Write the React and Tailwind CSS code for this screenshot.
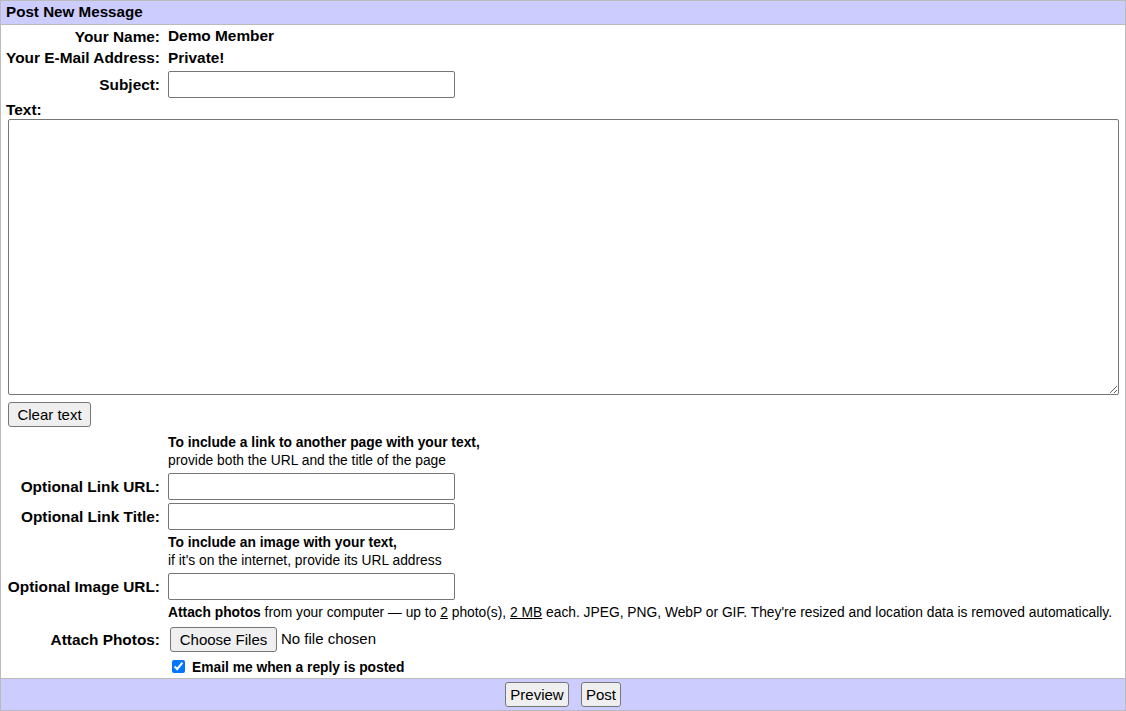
import { useState } from "react";

const Field = ({ label, height = "h-[30px]", children }) => (
  <div className={`flex items-center ${height}`}>
    <div className="w-[159px] shrink-0 text-right font-bold text-[15.4px] leading-[17px] whitespace-nowrap">{label}</div>
    <div className="ml-[8px] flex items-center">{children}</div>
  </div>
);

const TextInput = ({ value, onChange }) => (
  <input
    type="text"
    value={value}
    onChange={onChange}
    className="w-[287px] h-[27px] border border-[#767676] rounded-[2px] bg-white px-[2px] text-[15px] outline-none"
  />
);

const Btn = ({ children, className = "", onClick }) => (
  <button
    type="button"
    onClick={onClick}
    className={`h-[25px] bg-[#efefef] border border-[#767676] rounded-[3px] text-[15px] leading-none text-black text-center ${className}`}
  >
    {children}
  </button>
);

export default function App() {
  const [form, setForm] = useState({ subject: "", text: "", linkUrl: "", linkTitle: "", imageUrl: "" });
  const [notify, setNotify] = useState(true);

  const set = (key) => (e) => setForm({ ...form, [key]: e.target.value });

  return (
    <div className="w-[1126px] h-[711px] flex flex-col border border-[#bbbbbb] bg-white text-black font-['Liberation_Sans',Arial,sans-serif]">
      {/* header bar */}
      <div className="h-[24px] shrink-0 flex items-center px-[5px] bg-[#ccccff] border-b border-[#bbbbbb] text-[15.2px] font-bold">
        Post New Message
      </div>

      <div className="flex-1 flex flex-col">
        <Field label="Your Name:" height="h-[22px]">
          <span className="font-bold text-[15.4px]">Demo Member</span>
        </Field>
        <Field label="Your E-Mail Address:" height="h-[21px]">
          <span className="font-bold text-[15.4px]">Private!</span>
        </Field>
        <Field label="Subject:" height="h-[32px]">
          <TextInput value={form.subject} onChange={set("subject")} />
        </Field>

        <div className="h-[19px] flex items-center pl-[5px] font-bold text-[15.4px]">Text:</div>
        <textarea
          value={form.text}
          onChange={set("text")}
          className="ml-[7px] w-[1111px] h-[276px] border border-[#767676] rounded-[2px] p-[2px] text-[15px] outline-none resize"
        />

        <div className="mt-[7px] ml-[7px]">
          <Btn className="w-[83px]" onClick={() => setForm({ ...form, text: "" })}>Clear text</Btn>
        </div>

        {/* link help */}
        <div className="mt-[7px] pl-[167px] text-[13.8px] leading-[18px]">
          <div className="font-bold">To include a link to another page with your text,</div>
          <div>provide both the URL and the title of the page</div>
        </div>
        <div className="mt-[1px]">
          <Field label="Optional Link URL:">
            <TextInput value={form.linkUrl} onChange={set("linkUrl")} />
          </Field>
        </div>
        <Field label="Optional Link Title:">
          <TextInput value={form.linkTitle} onChange={set("linkTitle")} />
        </Field>

        {/* image help */}
        <div className="mt-[3px] pl-[167px] text-[13.8px] leading-[18px]">
          <div className="font-bold">To include an image with your text,</div>
          <div>if it's on the internet, provide its URL address</div>
        </div>
        <div className="mt-[1px]">
          <Field label="Optional Image URL:">
            <TextInput value={form.imageUrl} onChange={set("imageUrl")} />
          </Field>
        </div>

        <div className="mt-[3px] pl-[167px] text-[13.8px] leading-[18px] whitespace-nowrap">
          <b>Attach photos</b> from your computer — up to <u>2</u> photo(s), <u>2 MB</u> each. JPEG, PNG, WebP or GIF. They're resized and location data is removed automatically.
        </div>

        <Field label="Attach Photos:" height="h-[34px]">
          <Btn className="ml-[2px] w-[107px]">Choose Files</Btn>
          <span className="ml-[4px] text-[15px]">No file chosen</span>
        </Field>

        <div className="h-[21px] flex items-center pl-[171px]">
          <input
            type="checkbox"
            checked={notify}
            onChange={(e) => setNotify(e.target.checked)}
            className="m-0 w-[13px] h-[13px] accent-[#0075ff]"
          />
          <span className="ml-[7px] mt-[4px] text-[13.8px] font-bold">Email me when a reply is posted</span>
        </div>
      </div>

      {/* footer bar */}
      <div className="h-[32px] shrink-0 flex items-center justify-center gap-[12px] bg-[#ccccff] border-t border-[#bbbbbb]">
        <Btn className="w-[64px]">Preview</Btn>
        <Btn className="w-[40px]">Post</Btn>
      </div>
    </div>
  );
}
